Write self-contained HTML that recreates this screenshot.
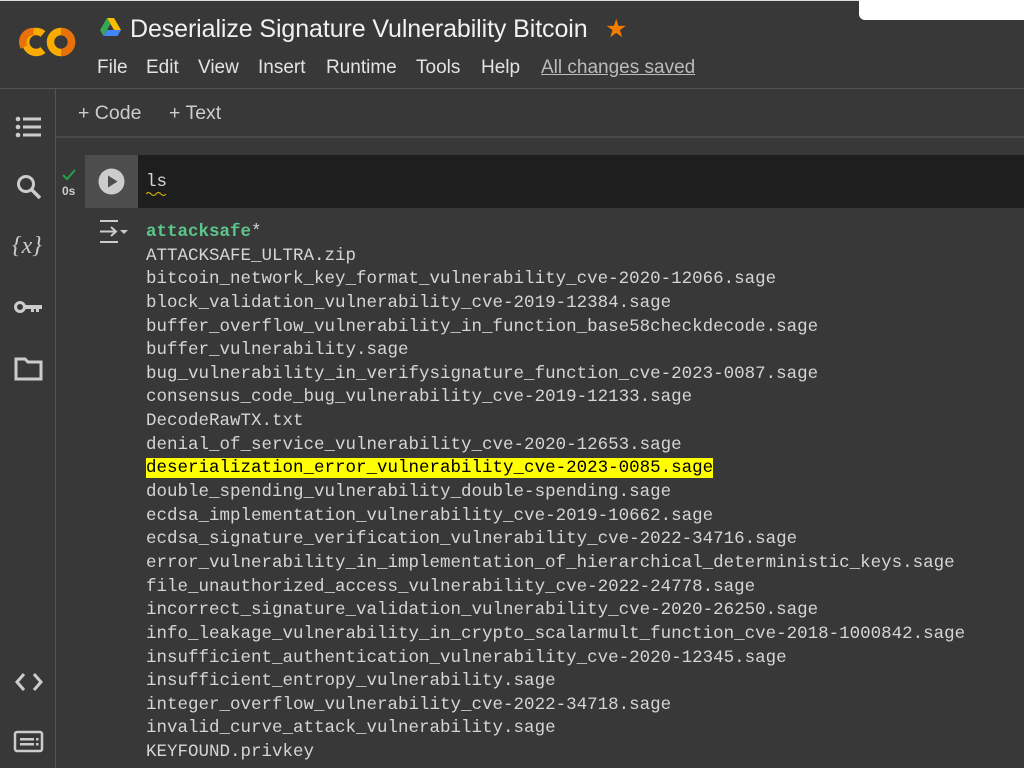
<!DOCTYPE html>
<html style="overflow:hidden"><head><style>
*{margin:0;padding:0;box-sizing:border-box}
body{width:1024px;height:768px;overflow:hidden;background:#383838;font-family:"Liberation Sans",sans-serif;color:#e3e3e3;position:relative}
.a{position:absolute}
.out div{height:23.65px;line-height:23.65px;white-space:pre}
.menu span{position:absolute;top:0;white-space:nowrap}
</style></head><body>
<div class="a" style="left:0;top:0;width:1024px;height:1px;background:#ddd"></div>
<div class="a" style="left:859px;top:0;width:165px;height:20px;background:#fff;border-bottom-left-radius:6px"></div>
<svg class="a" style="left:19px;top:25px" width="58" height="34" viewBox="0 0 58 34">
<path d="M24 9 A10.5 10.5 0 1 0 24 25" fill="none" stroke="#f9ab00" stroke-width="7.5"/>
<circle cx="42" cy="17" r="10.5" fill="none" stroke="#f9ab00" stroke-width="7.5"/>
<path d="M42 27.5 A10.5 10.5 0 0 0 42 6.5" fill="none" stroke="#e8710a" stroke-width="7.5"/>
<path d="M14.5 6.5 A10.5 10.5 0 0 0 5 22" fill="none" stroke="#e8710a" stroke-width="7.5"/>
</svg>
<svg class="a" style="left:100px;top:18px" width="21" height="18" viewBox="0 0 21 18">
<path d="M7 0h7l7 12h-7z" fill="#fbbc04"/><path d="M7 0L0 12l3.5 6L10.5 6z" fill="#34a853"/><path d="M3.5 18h14l3.5-6H7z" fill="#4285f4"/>
</svg>
<div class="a" style="left:130px;top:15px;font-size:25px;color:#f1f1f1;letter-spacing:-0.1px">Deserialize Signature Vulnerability Bitcoin</div>
<div class="a" style="left:605px;top:14px;font-size:25px;color:#f57c00">★</div>
<div class="a menu" style="left:0;top:57px;font-size:19px;color:#e3e3e3">
<span style="left:97px">File</span><span style="left:146px">Edit</span><span style="left:198px">View</span><span style="left:258px">Insert</span><span style="left:326px">Runtime</span><span style="left:416px">Tools</span><span style="left:481px">Help</span><span style="left:541px;text-decoration:underline;color:#bbb">All changes saved</span></div>
<div class="a" style="left:0;top:88px;width:1024px;height:1px;background:#555"></div>
<div class="a" style="left:55px;top:89px;width:1px;height:679px;background:#555"></div>
<div class="a" style="left:56px;top:136px;width:968px;height:2px;background:#4a4a4a"></div>
<div class="a" style="left:78px;top:102px;font-size:19.5px;color:#ccc">+ Code</div>
<div class="a" style="left:169px;top:102px;font-size:19.5px;color:#ccc">+ Text</div>
<svg class="a" style="left:14px;top:115px" width="30" height="24" viewBox="0 0 30 24" fill="#ccc"><circle cx="4" cy="4" r="2.3"/><circle cx="4" cy="12" r="2.3"/><circle cx="4" cy="20" r="2.3"/><rect x="9" y="2.5" width="18" height="3"/><rect x="9" y="10.5" width="18" height="3"/><rect x="9" y="18.5" width="18" height="3"/></svg>
<svg class="a" style="left:15px;top:173px" width="28" height="28" viewBox="0 0 28 28"><circle cx="11" cy="11" r="7.5" fill="none" stroke="#ccc" stroke-width="3"/><path d="M16.5 16.5L25 25" stroke="#ccc" stroke-width="3.5"/></svg>
<div class="a" style="left:12px;top:233px;font-family:'Liberation Serif',serif;font-style:italic;font-size:24px;color:#ccc">{<i>x</i>}</div>
<svg class="a" style="left:13px;top:297px" width="32" height="20" viewBox="0 0 32 20"><circle cx="7" cy="10" r="4.5" fill="none" stroke="#ccc" stroke-width="3"/><path d="M11 8h18v4h-3v3h-3v-3h-2v3h-3v-3h-7z" fill="#ccc"/></svg>
<svg class="a" style="left:14px;top:357px" width="30" height="24" viewBox="0 0 30 24"><path d="M2 2h9l3 3h13v17H2z" fill="none" stroke="#ccc" stroke-width="3"/></svg>
<svg class="a" style="left:14px;top:672px" width="30" height="20" viewBox="0 0 30 20" fill="none" stroke="#ccc" stroke-width="3"><path d="M10 2L3 10l7 8M20 2l7 8-7 8"/></svg>
<svg class="a" style="left:13px;top:730px" width="32" height="24" viewBox="0 0 32 24"><rect x="2" y="2" width="27" height="19" rx="2" fill="none" stroke="#ccc" stroke-width="2.5"/><rect x="7" y="8" width="14" height="2.5" fill="#ccc"/><rect x="7" y="13" width="14" height="2.5" fill="#ccc"/><rect x="23" y="8" width="2.5" height="2.5" fill="#ccc"/><rect x="23" y="13" width="2.5" height="2.5" fill="#ccc"/></svg>
<div class="a" style="left:85px;top:155px;width:939px;height:53px;background:#1e1e1e"></div>
<div class="a" style="left:85px;top:155px;width:53px;height:53px;background:#4d4d4d"></div>
<svg class="a" style="left:98px;top:168px" width="27" height="27" viewBox="0 0 27 27"><circle cx="13.5" cy="13.5" r="13" fill="#ccc"/><path d="M10 7.5v12l9.5-6z" fill="#4d4d4d"/></svg>
<svg class="a" style="left:62px;top:169px" width="14" height="12" viewBox="0 0 14 12"><path d="M1 6l4 4 8-9" fill="none" stroke="#1ea446" stroke-width="2"/></svg>
<div class="a" style="left:62px;top:184px;font-size:12px;color:#ccc;font-weight:bold">0s</div>
<div class="a" style="left:146px;top:172px;font-family:'Liberation Mono',monospace;font-size:17.5px;color:#d4d4d4">ls</div>
<svg class="a" style="left:146px;top:191px" width="22" height="5" viewBox="0 0 22 5"><path d="M0 3q2.5-3 5 0t5 0t5 0t5 0" fill="none" stroke="#c9a400" stroke-width="1.2"/></svg>
<svg class="a" style="left:98px;top:219px" width="32" height="26" viewBox="0 0 32 26" fill="none" stroke="#ccc" stroke-width="2"><path d="M3 3v-1h16v1M3 22v1h16v-1M2 12.5h16M13 8l5 4.5-5 4.5"/><path d="M22 11h8l-4 4z" fill="#ccc" stroke="none"/></svg>
<div class="a out" style="left:146px;top:221px;font-family:'Liberation Mono',monospace;font-size:17.5px;color:#d5d5d5">
<div><span style="font-weight:bold;color:#5bc58a">attacksafe</span>*</div>
<div>ATTACKSAFE_ULTRA.zip</div>
<div>bitcoin_network_key_format_vulnerability_cve-2020-12066.sage</div>
<div>block_validation_vulnerability_cve-2019-12384.sage</div>
<div>buffer_overflow_vulnerability_in_function_base58checkdecode.sage</div>
<div>buffer_vulnerability.sage</div>
<div>bug_vulnerability_in_verifysignature_function_cve-2023-0087.sage</div>
<div>consensus_code_bug_vulnerability_cve-2019-12133.sage</div>
<div>DecodeRawTX.txt</div>
<div>denial_of_service_vulnerability_cve-2020-12653.sage</div>
<div><span style="background:#ffff00;color:#000">deserialization_error_vulnerability_cve-2023-0085.sage</span></div>
<div>double_spending_vulnerability_double-spending.sage</div>
<div>ecdsa_implementation_vulnerability_cve-2019-10662.sage</div>
<div>ecdsa_signature_verification_vulnerability_cve-2022-34716.sage</div>
<div>error_vulnerability_in_implementation_of_hierarchical_deterministic_keys.sage</div>
<div>file_unauthorized_access_vulnerability_cve-2022-24778.sage</div>
<div>incorrect_signature_validation_vulnerability_cve-2020-26250.sage</div>
<div>info_leakage_vulnerability_in_crypto_scalarmult_function_cve-2018-1000842.sage</div>
<div>insufficient_authentication_vulnerability_cve-2020-12345.sage</div>
<div>insufficient_entropy_vulnerability.sage</div>
<div>integer_overflow_vulnerability_cve-2022-34718.sage</div>
<div>invalid_curve_attack_vulnerability.sage</div>
<div>KEYFOUND.privkey</div>
</div>
</body></html>
